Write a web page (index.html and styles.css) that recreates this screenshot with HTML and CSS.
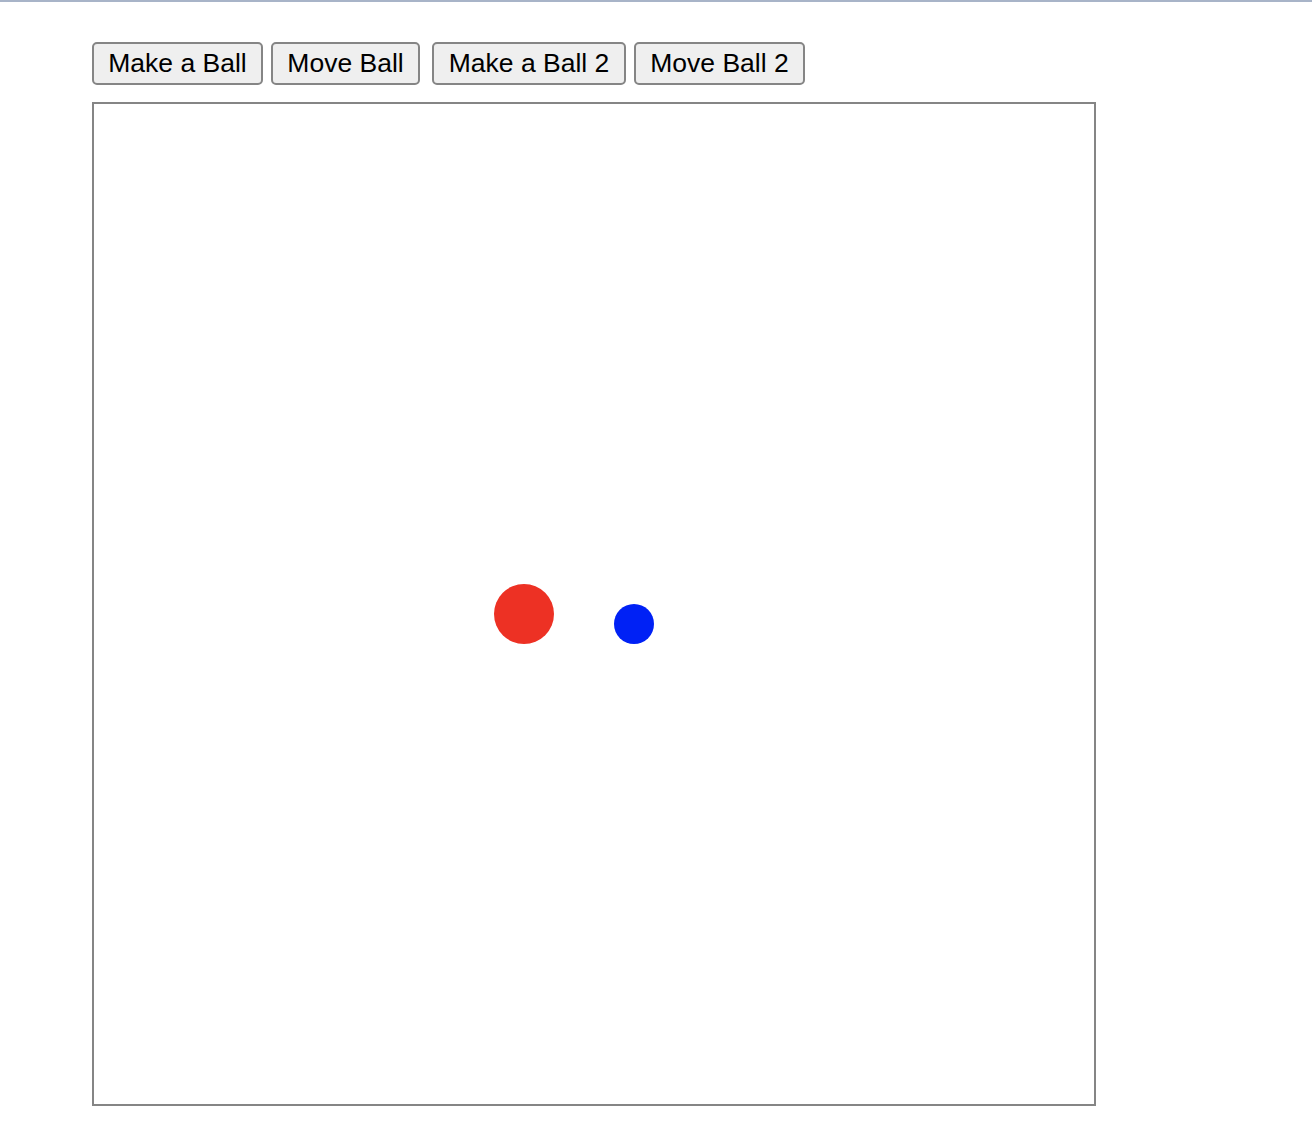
FILE: index.html
```html
<!DOCTYPE html>
<html>
<head>
<meta charset="utf-8">
<link rel="stylesheet" href="styles.css">
</head>
<body>
<div class="page">
  <div class="toolbar">
    <button class="btn btn-make">Make a Ball</button>
    <button class="btn btn-move">Move Ball</button>
    <button class="btn btn-make2">Make a Ball 2</button>
    <button class="btn btn-move2">Move Ball 2</button>
  </div>
  <div class="stage">
    <div class="ball ball-red"></div>
    <div class="ball ball-blue"></div>
  </div>
</div>
</body>
</html>
```

FILE: styles.css
```css
html {
  border-top: 2px solid #a8b4c8;
  background: #ffffff;
}
body {
  margin: 0;
  font-family: "Liberation Sans", Arial, Helvetica, sans-serif;
}
.page {
  padding: 40px 0 0 92px;
}
.toolbar {
  display: flex;
  height: 43px;
}
.btn {
  box-sizing: border-box;
  height: 43px;
  padding: 0;
  margin: 0;
  border: 2px solid #858585;
  border-radius: 5px;
  background: #efefef;
  color: #000;
  font-family: "Liberation Sans", Arial, Helvetica, sans-serif;
  font-size: 26.5px;
  text-align: center;
}
.btn-make { width: 171px; }
.btn-move { width: 149px; margin-left: 8px; }
.btn-make2 { width: 194px; margin-left: 12px; }
.btn-move2 { width: 171px; margin-left: 8px; }
.stage {
  position: relative;
  margin-top: 17px;
  width: 1000px;
  height: 1000px;
  border: 2px solid #858585;
  background: #fff;
}
.ball {
  position: absolute;
  border-radius: 50%;
}
.ball-red {
  left: 400px;
  top: 480px;
  width: 60px;
  height: 60px;
  background: #ed3124;
}
.ball-blue {
  left: 520px;
  top: 500px;
  width: 40px;
  height: 40px;
  background: #0021f5;
}
```
